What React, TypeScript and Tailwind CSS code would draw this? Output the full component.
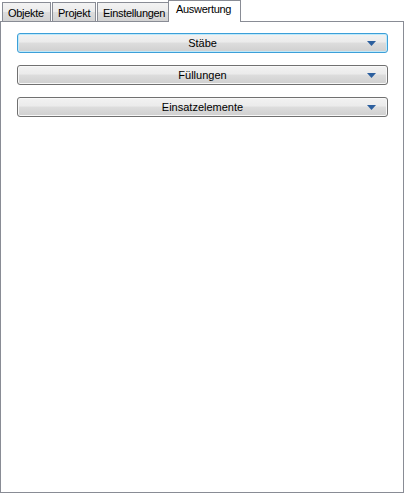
import { useState } from "react";

const tabs = ["Objekte", "Projekt", "Einstellungen", "Auswertung"];
const sections = ["Stäbe", "Füllungen", "Einsatzelemente"];

function Arrow() {
  return (
    <svg width="9" height="5" viewBox="0 0 9 5" className="block">
      <path d="M0 0 H9 L4.5 5 Z" fill="#2c5f9e" />
    </svg>
  );
}

function DropButton({ label, focused }: { label: string; focused?: boolean }) {
  return (
    <button
      className={
        "relative flex h-[20px] w-full items-center justify-center rounded-[3px] border bg-[linear-gradient(to_bottom,#f2f2f2_0%,#ebebeb_45%,#dddddd_50%,#cfcfcf_100%)] text-[11px] leading-none text-black " +
        (focused
          ? "border-[#3c9fd8] shadow-[inset_0_0_0_1px_#bfe9fa]"
          : "border-[#707070] shadow-[inset_0_0_0_1px_#f8f8f8]")
      }
    >
      <span>{label}</span>
      <span className="absolute right-[11px] top-[7px]">
        <Arrow />
      </span>
    </button>
  );
}

export default function App() {
  const [active, setActive] = useState(3);

  return (
    <div className="h-[494px] w-[406px] bg-white font-['Liberation_Sans',Arial,sans-serif]">
      <div className="flex h-[21px] items-end pl-[2px]">
        {tabs.map((t, i) =>
          i === active ? (
            <div
              key={t}
              onClick={() => setActive(i)}
              className="relative z-10 -mb-px -ml-px h-[22px] w-[73px] flex-none whitespace-nowrap border border-b-0 border-[#898c95] bg-white pl-[7px] pt-[1px] text-[11px] leading-[14px] tracking-[-0.3px] text-black"
            >
              {t}
            </div>
          ) : (
            <div
              key={t}
              onClick={() => setActive(i)}
              className={
                "h-[19px] flex-none overflow-hidden whitespace-nowrap border border-b-0 border-[#898c95] bg-[linear-gradient(to_bottom,#f3f3f3_0%,#ebebeb_50%,#dddddd_51%,#d3d3d3_100%)] pl-[5px] pt-[3px] text-[11px] leading-[14px] tracking-[-0.3px] text-black " +
                (i === 0 ? "w-[49px]" : i === 1 ? "ml-[1px] w-[44px]" : "ml-[1px] w-[72px]")
              }
            >
              {t}
            </div>
          )
        )}
      </div>
      <div className="flex h-[472px] w-[404px] flex-col gap-[12px] border border-[#898c95] bg-white pl-[16px] pr-[15px] pt-[11px]">
        {sections.map((s, i) => (
          <DropButton key={s} label={s} focused={i === 0} />
        ))}
      </div>
    </div>
  );
}
